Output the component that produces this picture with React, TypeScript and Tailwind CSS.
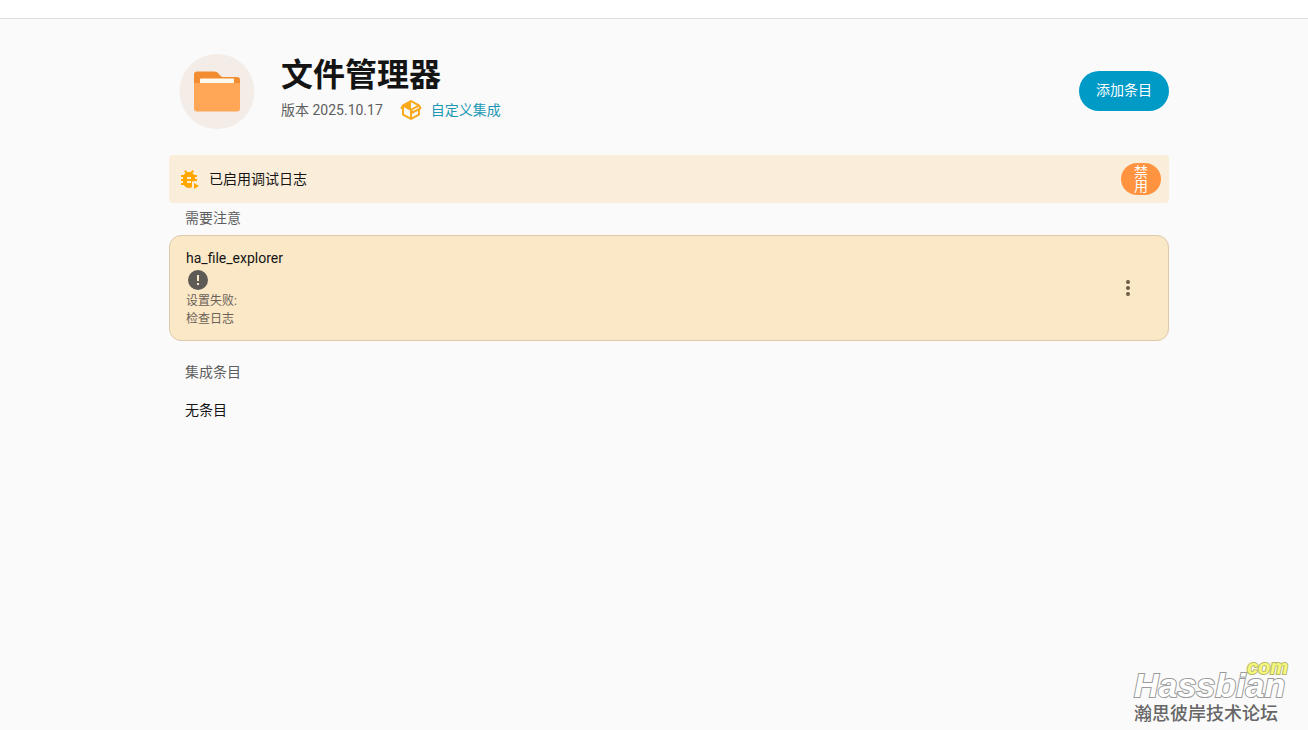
import React from 'react';

const ICONS = {
  packageVariant:
    'M2,10.96C1.5,10.68 1.35,10.07 1.63,9.59L3.13,7C3.24,6.8 3.41,6.66 3.6,6.58L11.43,2.18C11.59,2.06 11.79,2 12,2C12.21,2 12.41,2.06 12.57,2.18L20.47,6.62C20.66,6.72 20.82,6.88 20.91,7.08L22.36,9.6C22.64,10.08 22.47,10.69 22,10.96L21,11.54V16.5C21,16.88 20.79,17.21 20.47,17.38L12.57,21.82C12.41,21.94 12.21,22 12,22C11.79,22 11.59,21.94 11.43,21.82L3.53,17.38C3.21,17.21 3,16.88 3,16.5V10.96C2.7,11.13 2.32,11.14 2,10.96M12,4.15V4.15L12,10.85V10.85L17.96,7.5L12,4.15M5,15.91L11,19.29V12.58L5,9.21V15.91M19,15.91V12.69L14,15.59C13.67,15.77 13.3,15.76 13,15.6V19.29L19,15.91M13.85,13.36L20.13,9.73L19.55,8.72L13.27,12.35L13.85,13.36Z',
  bugPlay:
    'M14,12H10V10H14M14,16H10V14H14M20,8H17.19C16.74,7.22 16.12,6.55 15.37,6.04L17,4.41L15.59,3L13.42,5.17C12.96,5.06 12.49,5 12,5C11.51,5 11.04,5.06 10.59,5.17L8.41,3L7,4.41L8.62,6.04C7.88,6.55 7.26,7.22 6.81,8H4V10H6.09C6.04,10.33 6,10.66 6,11V12H4V14H6V15C6,15.34 6.04,15.67 6.09,16H4V18H6.81C8.47,20.87 12.14,21.84 15,20.18V14.6C15.9,14.1 17,13.95 18,14H20V12H18V11C18,10.66 17.96,10.33 17.91,10H20V8M17,16V22L22,19L17,16Z',
  alertCircle:
    'M13,13H11V7H13M13,17H11V15H13M12,2A10,10 0 0,0 2,12A10,10 0 0,0 12,22A10,10 0 0,0 22,12A10,10 0 0,0 12,2Z',
  dotsVertical:
    'M12,16A2,2 0 0,1 14,18A2,2 0 0,1 12,20A2,2 0 0,1 10,18A2,2 0 0,1 12,16M12,10A2,2 0 0,1 14,12A2,2 0 0,1 12,14A2,2 0 0,1 10,12A2,2 0 0,1 12,10M12,4A2,2 0 0,1 14,6A2,2 0 0,1 12,8A2,2 0 0,1 10,6A2,2 0 0,1 12,4Z',
};

interface IconProps {
  path: string;
  className?: string;
}

const Icon: React.FC<IconProps> = ({ path, className }) => (
  <svg viewBox="0 0 24 24" className={`size-6 shrink-0 fill-current ${className || ''}`} aria-hidden="true">
    <path d={path} />
  </svg>
);

const FolderLogo: React.FC = () => (
  <svg viewBox="0 0 76 76" className="size-[76px] shrink-0" aria-hidden="true">
    <circle cx="38" cy="38.5" r="37.5" fill="#f3ece7" />
    <path d="M18 18.500h17c5 0 6 5.500 9 5.500h14q3 0 3 3v8H15V21.500q0-3 3-3z" fill="#f28c30" />
    <rect x="21" y="25.5" width="34" height="8" rx="1" fill="#fff9ee" />
    <path d="M15 30h46v25.500q0 3-3 3H18q-3 0-3-3z" fill="#ffa756" />
  </svg>
);

const Header: React.FC = () => (
  <header className="flex items-center justify-between pl-[10px]">
    <div className="flex items-start gap-[26px]">
      <FolderLogo />
      <div>
        <h1 className="text-[32px] leading-[44px] font-bold">文件管理器</h1>
        <div className="flex items-center gap-4 text-sm leading-[26px] text-[#5e5e5e]">
          <span>版本 2025.10.17</span>
          <a href="#custom" className="flex items-center gap-2 text-[#1b98b5]">
            <Icon path={ICONS.packageVariant} className="text-[#f9a91c]" />
            自定义集成
          </a>
        </div>
      </div>
    </div>
    <button type="button" className="h-10 rounded-full bg-[#009ac7] px-[17px] pb-0.5 text-sm text-white">
      添加条目
    </button>
  </header>
);

const DebugBanner: React.FC = () => (
  <div className="mt-[26px] flex items-center justify-between rounded-sm bg-[#faeedb] p-2">
    <div className="flex items-center gap-2 text-sm">
      <Icon path={ICONS.bugPlay} className="text-[#ffa600]" />
      已启用调试日志
    </div>
    <button
      type="button"
      className="h-8 w-10 rounded-full bg-[#ff9340] px-3 text-center text-sm leading-[14px] text-white"
    >
      禁用
    </button>
  </div>
);

const EntryCard: React.FC = () => (
  <article className="flex items-center justify-between rounded-xl border border-[#dccaab] bg-[#fbe8c7] px-4 py-3">
    <div>
      <h3 className="text-sm leading-5">ha_file_explorer</h3>
      <Icon path={ICONS.alertCircle} className="text-[#5e5a55]" />
      <div className="text-xs leading-[18px] text-[#6a6258]">
        <p>设置失败:</p>
        <p>检查日志</p>
      </div>
    </div>
    <button type="button" aria-label="菜单" className="flex size-12 items-center justify-center text-[#6a5c48]">
      <Icon path={ICONS.dotsVertical} />
    </button>
  </article>
);

const Watermark: React.FC = () => (
  <div className="absolute right-5 bottom-1 w-[154px]" aria-hidden="true">
    <p className="text-right font-['Liberation_Sans',sans-serif] text-xl leading-[14px] font-bold text-[#f5f77c] italic [-webkit-text-stroke:2px_#b9b96c] [paint-order:stroke_fill]">
      com
    </p>
    <p className="pb-1.5 font-['Liberation_Sans',sans-serif] text-[34px] leading-[22px] font-bold text-white italic [-webkit-text-stroke:2px_#9a9a9a] [paint-order:stroke_fill]">
      Hassbian
    </p>
    <p className="text-lg leading-6 font-medium text-[#666666]">瀚思彼岸技术论坛</p>
  </div>
);

const App: React.FC = () => {
  return (
    <div
      lang="zh-CN"
      className="relative flex min-h-screen flex-col bg-[#fafafa] font-[Roboto,'Noto_Sans_CJK_SC',sans-serif] text-[#141414]"
    >
      <div className="h-[19px] border-b border-[#e0e0e0] bg-white" />

      <main className="flex-1 pt-[34px] pl-[30px]">
        <div className="mx-auto max-w-[1000px]">
          <Header />
          <DebugBanner />

          <section>
            <h2 className="px-4 pt-1 pb-1.5 text-sm leading-[22px] text-[#5e5e5e]">需要注意</h2>
            <EntryCard />
          </section>

          <section className="px-4 pt-5 text-sm leading-[22px]">
            <h2 className="text-[#5e5e5e]">集成条目</h2>
            <p className="pt-4">无条目</p>
          </section>
        </div>
      </main>

      <Watermark />
    </div>
  );
};

export default App;
